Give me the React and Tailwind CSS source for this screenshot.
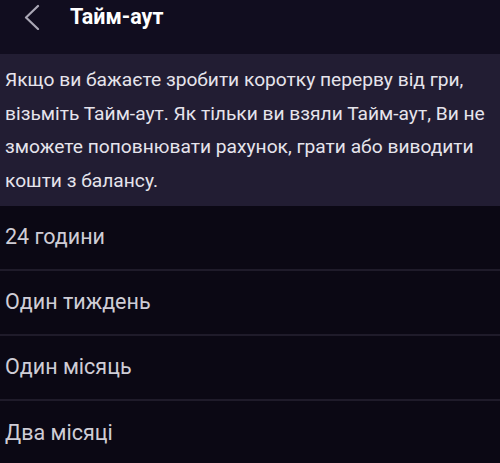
import React from "react";

const options = ["24 години", "Один тиждень", "Один місяць", "Два місяці"];

const App = () => {
  return (
    <div className="w-[500px] h-[463px] overflow-hidden bg-[#0b0814] font-['Roboto',sans-serif]">
      {/* Header */}
      <div className="h-[54px] bg-[#110d1f] flex items-start">
        <button className="w-[70px] h-[34px] flex items-center justify-start pl-[23px]">
          <svg width="18" height="26" viewBox="0 0 18 26" fill="none">
            <path d="M15 2 L3 13.5 L15 25" stroke="#aaa7b5" strokeWidth="2.2" strokeLinecap="round" strokeLinejoin="round" />
          </svg>
        </button>
        <h1 className="h-[33px] flex items-center text-[21.5px] font-bold text-white leading-none">Тайм-аут</h1>
      </div>

      {/* Info */}
      <div className="bg-[#221d33] px-[5px] pt-[9px] pb-[9px]">
        <p className="text-[19.2px] leading-[33.5px] text-[#e6e4ec]">
          Якщо ви бажаєте зробити коротку перерву від гри, візьміть Тайм-аут. Як тільки ви взяли Тайм-аут, Ви не зможете поповнювати рахунок, грати або виводити кошти з балансу.
        </p>
      </div>

      {/* Options */}
      <ul>
        {options.map((o, i) => (
          <li
            key={o}
            className={`h-[65px] flex items-center px-[5px] text-[21.5px] text-[#cfcdd6] ${i < options.length - 1 ? "border-b-2 border-[#1f1b2a]" : ""}`}
          >
            {o}
          </li>
        ))}
      </ul>
    </div>
  );
};

export default App;
